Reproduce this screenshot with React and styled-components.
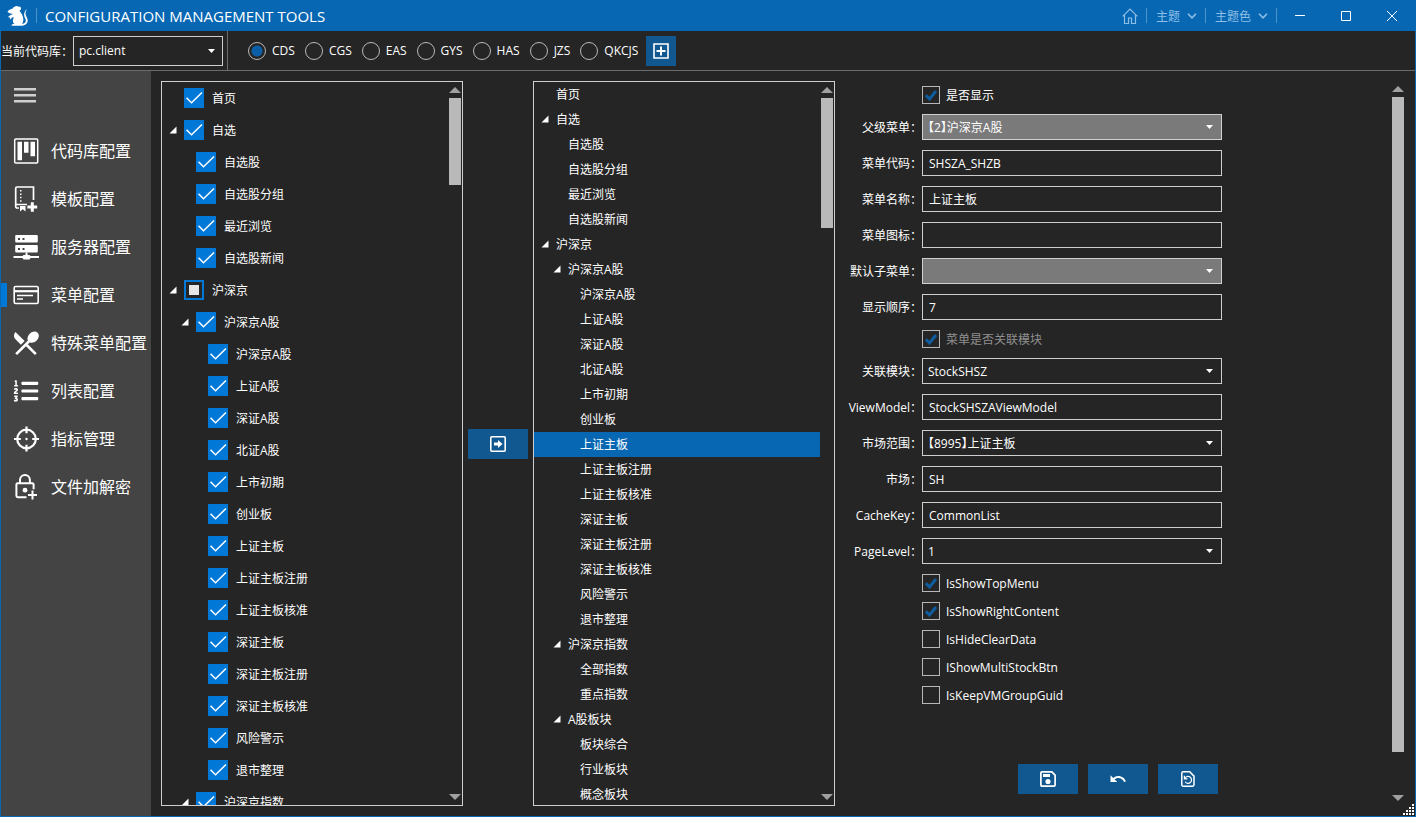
import React from "react";
import styled, { createGlobalStyle, css } from "styled-components";
import { FaListOl } from "react-icons/fa";
import { MdRestaurantMenu, MdUndo } from "react-icons/md";

// --- Theme values ---
const colors = {
  primary: "#0767b3",
  accent: "#0078d7",
  button: "#10588f",
  background: "#252525",
  sidebar: "#444444",
  border: "#cfcfcf",
  line: "#6b6b6b",
  disabled: "#7a7a7a",
  thumb: "#b9b9b9",
};

const GlobalStyle = createGlobalStyle`
  * {
    box-sizing: border-box;
  }

  body {
    margin: 0;
    background: ${colors.background};
  }

  body, button, input, select {
    font-family: "Open Sans", "Noto Sans CJK SC", sans-serif;
    font-size: 12px;
    color: #ffffff;
  }
`;

// --- Window ---
const Window = styled.div`
  display: flex;
  flex-direction: column;
  height: 100vh;
  border: 1px solid ${colors.primary};
  border-top: none;
  overflow: hidden;
`;

const TitleBar = styled.header`
  display: flex;
  align-items: center;
  flex: none;
  height: 31px;
  padding-left: 5px;
  background: ${colors.primary};
`;

const Brand = styled.div`
  display: flex;
  align-items: center;
  flex: 1;
  gap: 6px;
`;

const Title = styled.h1`
  margin: 0;
  padding-left: 2px;
  font-size: 15px;
  font-weight: 400;
  line-height: 24px;
  white-space: nowrap;
`;

const Separator = styled.span`
  width: 1px;
  height: 15px;
  background: #4a93cb;
`;

const TitleLink = styled.button`
  display: flex;
  align-items: center;
  gap: 7px;
  height: 31px;
  padding: 0 8px 0 9px;
  border: none;
  background: none;
  color: #8dbfe6;
`;

const CaptionButton = styled.button`
  display: grid;
  place-items: center;
  width: 46px;
  height: 31px;
  padding: 0;
  border: none;
  background: none;
`;

// --- Toolbar ---
const Toolbar = styled.div`
  display: flex;
  align-items: center;
  flex: none;
  height: 40px;
  border-bottom: 1px solid ${colors.line};
`;

const ToolbarField = styled.div`
  display: flex;
  align-items: center;
  align-self: stretch;
  padding-right: 4px;
  border-right: 1px solid ${colors.line};
`;

const RadioGroup = styled.div`
  display: flex;
  align-items: center;
  gap: 10px;
  padding: 0 8px 0 20px;
`;

const RadioLabel = styled.label`
  display: flex;
  align-items: center;
  gap: 6px;
`;

const Radio = styled.input`
  appearance: none;
  width: 18px;
  height: 18px;
  margin: 0;
  border: 1px solid #b8b8b8;
  border-radius: 50%;

  &:checked {
    background: radial-gradient(circle, #0a5fa8 0 5px, transparent 6px);
  }
`;

const ActionButton = styled.button`
  display: grid;
  place-items: center;
  flex: none;
  width: ${({ $square }) => ($square ? "30px" : "60px")};
  height: 30px;
  padding: 0;
  border: none;
  background: ${colors.button};
`;

// --- Sidebar ---
const Body = styled.div`
  display: flex;
  flex: 1;
  min-height: 0;
`;

const Sidebar = styled.nav`
  display: flex;
  flex-direction: column;
  flex: none;
  width: 150px;
  background: ${colors.sidebar};
`;

const MenuToggle = styled.button`
  display: flex;
  align-items: center;
  height: 48px;
  margin-bottom: 8px;
  padding: 0 13px;
  border: none;
  background: none;
`;

const NavItem = styled.a`
  display: flex;
  align-items: center;
  height: 48px;
  color: #ffffff;
  font-size: 16px;
  text-decoration: none;
  white-space: nowrap;

  &::before {
    content: "";
    width: 6px;
    height: 24px;
    margin-right: 6px;
    background: ${({ $active }) => ($active ? colors.accent : "transparent")};
  }

  svg {
    flex: none;
    margin-right: 12px;
  }
`;

const NavText = styled.span`
  padding-bottom: 2px;
`;

// --- Trees ---
const Content = styled.main`
  display: flex;
  flex: 1;
  min-width: 0;
  padding: 10px;
`;

const TreePanel = styled.section`
  display: flex;
  flex: none;
  width: 302px;
  border: 1px solid ${colors.border};
`;

const TreeList = styled.ul`
  flex: 1;
  margin: 0;
  padding: 0;
  list-style: none;
  overflow-y: auto;
  scrollbar-width: none;
`;

const TreeRow = styled.li`
  display: flex;
  align-items: center;
  height: ${({ $tall }) => ($tall ? "32px" : "25px")};
  padding-bottom: ${({ $tall }) => ($tall ? "0" : "1px")};
  padding-left: ${({ $level }) => 7 + $level * 12}px;
  background: ${({ $selected }) => ($selected ? colors.primary : "transparent")};
  white-space: nowrap;
`;

const Expander = styled.span`
  display: flex;
  flex: none;
  width: 15px;
`;

const TreeLabel = styled.label`
  display: flex;
  align-items: center;
  gap: 8px;
`;

const CheckWrap = styled.span`
  display: grid;
  flex: none;

  > * {
    grid-area: 1 / 1;
  }

  svg {
    place-self: center;
    pointer-events: none;
  }
`;

const TreeCheck = styled.input`
  appearance: none;
  width: 20px;
  height: 20px;
  margin: 0;
  border: 2px solid ${colors.accent};
  background: ${({ $partial }) => ($partial ? "transparent" : colors.accent)};
`;

const TransferColumn = styled.div`
  display: flex;
  align-items: center;
  justify-content: center;
  flex: none;
  width: 70px;
`;

// --- Scroll bar ---
const ScrollColumn = styled.div`
  display: flex;
  flex-direction: column;
  align-items: center;
  flex: none;
  width: 14px;
`;

const ScrollArrow = styled.span`
  display: grid;
  place-items: center;
  flex: none;
  height: 16px;
`;

const Track = styled.div`
  flex: 1;
  width: 12px;
`;

const Thumb = styled.div`
  height: ${({ $size }) => $size}%;
  background: ${colors.thumb};
`;

// --- Form ---
const FormPanel = styled.form`
  display: flex;
  flex: 1;
  min-width: 0;
`;

const FormScroll = styled.div`
  display: flex;
  flex-direction: column;
  flex: 1;
  min-width: 0;
  overflow-y: auto;
  scrollbar-width: none;
`;

const Field = styled.div`
  display: grid;
  grid-template-columns: 87px 300px;
  align-items: center;
  flex: none;
  height: 36px;
`;

const FieldLabel = styled.label`
  justify-self: end;
  white-space: nowrap;
`;

const CheckRow = styled.div`
  flex: none;
  height: 28px;
  padding: 5px 0 5px 87px;
`;

const CheckLabel = styled.label`
  display: inline-flex;
  align-items: center;
  gap: 6px;
  height: 18px;
  color: ${({ $muted }) => ($muted ? "#8f8f8f" : "#ffffff")};
`;

const FormCheck = styled.input`
  appearance: none;
  width: 18px;
  height: 18px;
  margin: 0;
  border: 1px solid #b8b8b8;
`;

const controlStyle = css`
  width: 100%;
  height: 26px;
  margin: 0;
  padding: 0 6px;
  border: 1px solid ${colors.border};
  border-radius: 0;
  background: transparent;
  color: #ffffff;
  outline: none;
`;

const TextInput = styled.input`
  ${controlStyle}
`;

const SelectWrap = styled.span`
  display: grid;
  align-items: center;
  width: ${({ $large }) => ($large ? "150px" : "100%")};

  > * {
    grid-area: 1 / 1;
  }

  svg {
    justify-self: end;
    margin-right: ${({ $large }) => ($large ? "8px" : "9px")};
    pointer-events: none;
  }
`;

const Select = styled.select`
  ${controlStyle}
  appearance: none;
  height: ${({ $large }) => ($large ? "30px" : "26px")};
  padding: 0 5px;
  font-feature-settings: "halt";

  &:disabled {
    background: ${colors.disabled};
    opacity: 1;
  }
`;

const FormActions = styled.div`
  display: flex;
  justify-content: flex-end;
  gap: 10px;
  flex: none;
  width: 383px;
  margin-top: auto;
  padding-bottom: 12px;
`;

const ResizeGrip = styled.svg`
  position: absolute;
  right: 2px;
  bottom: 2px;
`;

// --- Icons ---
const RatIcon = () => (
  <svg width="24" height="22" viewBox="0 0 24 22" fill="#fff">
    <path d="M8.6 1.7c1.3-1.3 3-.9 3.7.1 1.1-.6 2.9.2 2.7 1.9-.1 1-.7 1.6-1.4 1.9.2 1 .9 1.7 1.6 2.7 1.2 1.7 2 3.600 2.100 5.700.1 2-.4 3.700-1.200 4.900 2.400-.2 3.800-1.500 3.700-3.600-.1-1.800-1.600-3.100-1.700-5.400-.1-2.200 1-4.400 2.900-5.900-1.100 1.900-1.700 3.700-1.400 5.400.4 2.100 2 3.300 2.100 5.800.1 3.400-2.700 5.500-6.500 5.500H5.800c-.5-.8.3-1.700 1.600-1.700h1.200c-1.500-1-2-2.500-1.600-4.300l.8-2.700-2.100.7-.8 1.500-.9-.3.1-1.500-1.500.2-.2-1 2.200-1.500 2.400-1.100-2.200-.4C3.200 8.200 1.900 7.500 1.500 6.700c1.100-1.500 3-2.800 5.300-3.200.2-.8.8-1.500 1.800-1.800z" />
  </svg>
);

const HomeIcon = () => (
  <svg width="16" height="16" viewBox="0 0 16 16" fill="none" stroke="#8dbfe6" strokeWidth="1.2">
    <path d="M.7 8.300 8 1l7.300 7.300M2.500 7v8.500h4V10h3v5.500h4V7" />
  </svg>
);

const ChevronIcon = () => (
  <svg width="10" height="6" viewBox="0 0 10 6" fill="none" stroke="#8dbfe6" strokeWidth="1.6">
    <path d="m1 .8 4 4 4-4" />
  </svg>
);

const CaretIcon = () => (
  <svg width="7" height="4" viewBox="0 0 7 4" fill="#fff">
    <path d="M0 0h7L3.500 4z" />
  </svg>
);

const ExpandIcon = () => (
  <svg width="8" height="8" viewBox="0 0 8 8" fill="#fff">
    <path d="M7.500.5v7h-7z" />
  </svg>
);

const ThinCheck = () => (
  <svg width="20" height="20" viewBox="0 0 20 20" fill="none" stroke="#fff" strokeWidth="1.500">
    <path d="m2.500 9.700 5 5L18 4.500" />
  </svg>
);

const PartialMark = () => (
  <svg width="10" height="10" viewBox="0 0 10 10" fill="#e6e6e6">
    <path d="M0 0h10v10H0z" />
  </svg>
);

const BoldCheck = () => (
  <svg width="18" height="18" viewBox="0 0 18 18" fill="none" stroke="#0f5c9e" strokeWidth="3">
    <path d="m3.800 9.200 3.700 3.700L14 5" />
  </svg>
);

const ScrollArrowIcon = ({ down }) => (
  <svg width="12" height="6" viewBox="0 0 12 6" fill="#a0a0a0">
    <path d={down ? "M0 0h12L6 6z" : "M0 6h12L6 0z"} />
  </svg>
);

const HamburgerIcon = () => (
  <svg width="22" height="16" viewBox="0 0 22 16" fill="#cfcfcf">
    <path d="M0 1h22v2.600H0zM0 7h22v2.600H0zM0 13h22v2.600H0z" />
  </svg>
);

const BoardIcon = () => (
  <svg width="26" height="26" viewBox="0 0 26 26" fill="#fff">
    <rect x="1.700" y="1" width="23" height="24" rx="1" fill="none" stroke="#fff" strokeWidth="1.500" />
    <path d="M4.500 3.800H9v18.400H4.500zM11 3.800h4.500v11H11zM17.500 3.800H22v14.400h-4.500z" />
  </svg>
);

const TemplateIcon = () => (
  <svg width="26" height="26" viewBox="0 0 26 26" fill="#fff">
    <path
      d="M6 22H4.200a1.500 1.500 0 0 1-1.500-1.500V2.300c0-.7.600-1.300 1.300-1.300h16.500v13M2.700 18.500H14"
      fill="none"
      stroke="#fff"
      strokeWidth="1.700"
    />
    <path d="M7 4h1.500v1.500H7zM7 7.400h1.500v1.500H7zM7 10.800h1.500v1.500H7zM7 14.200h1.500v1.500H7zM7 20h5.500v5.500l-2.700-2.300L7 25.500z" />
    <path d="M17.800 16.200h3v3.300h3.400v3h-3.400v3.300h-3v-3.300h-3.400v-3h3.400z" />
  </svg>
);

const ServerIcon = () => (
  <svg width="26" height="26" viewBox="0 0 26 26" fill="#fff">
    <path
      fillRule="evenodd"
      d="M3.500 1h20c.8 0 1.300.5 1.300 1.300v5c0 .8-.5 1.300-1.300 1.300h-20c-.8 0-1.300-.5-1.300-1.300v-5C2.200 1.500 2.700 1 3.500 1zM5 4v2h2V4zm4.500 0v2h2V4zM3.500 11h20c.8 0 1.300.5 1.300 1.300v5c0 .8-.5 1.300-1.300 1.300h-20c-.8 0-1.300-.5-1.300-1.300v-5c0-.8.500-1.300 1.300-1.300zM5 14v2h2v-2zm4.500 0v2h2v-2z"
    />
    <path d="M12.500 18.500h2V21h2l1 1H26v2h-8.500l-1 1.500h-6l-1-1.500H.5v-2h9l1-1h2z" />
  </svg>
);

const CardIcon = () => (
  <svg width="26" height="26" viewBox="0 0 26 26" fill="none" stroke="#fff">
    <rect x="1.200" y="4.500" width="24" height="17" rx="1.500" strokeWidth="1.600" />
    <path d="M1 9.200h24" strokeWidth="2.200" />
    <path d="M4 13.500h16M4 17h6" strokeWidth="1.500" />
  </svg>
);

const TargetIcon = () => (
  <svg width="26" height="26" viewBox="0 0 26 26" fill="none" stroke="#fff" strokeWidth="2.200">
    <circle cx="13.500" cy="13" r="9.300" />
    <path d="M13.500.5v6.800M13.500 18.700v6.800M1 13h6.800M19.200 13H26" />
    <circle cx="13.500" cy="13" r="1.200" fill="#fff" stroke="none" />
  </svg>
);

const LockPlusIcon = () => (
  <svg width="26" height="26" viewBox="0 0 26 26" fill="none" stroke="#fff" strokeWidth="2">
    <path d="M13.500 23.200H4.800c-.8 0-1.400-.6-1.400-1.400V10.600c0-.8.600-1.400 1.400-1.400h14.400c.8 0 1.400.6 1.400 1.400v4.600M7 9.200V6a4.900 4.900 0 0 1 9.900 0v3.200M19.500 16.500v9M15 21h9" />
    <circle cx="12" cy="16.200" r="2.400" fill="#fff" stroke="none" />
  </svg>
);

const AddBoxIcon = () => (
  <svg width="16" height="16" viewBox="0 0 16 16" fill="none" stroke="#fff" strokeWidth="2">
    <path d="M1 1h14v14H1z" strokeWidth="1.600" />
    <path d="M8 3.500v9M3.500 8h9" />
  </svg>
);

const TransferIcon = () => (
  <svg width="16" height="16" viewBox="0 0 16 16" fill="#fff">
    <rect x=".8" y=".8" width="14.400" height="14.400" rx="1" fill="none" stroke="#fff" strokeWidth="1.600" />
    <path d="M4 6.500h4V4l4.500 4L8 12V9.500H4z" />
  </svg>
);

const SaveIcon = () => (
  <svg width="16" height="16" viewBox="0 0 16 16" fill="#fff">
    <path
      d="M2 .9h9.800l3.300 3.300V14c0 .6-.5 1.100-1.100 1.100H2c-.6 0-1.100-.5-1.100-1.100V2C.9 1.400 1.400.9 2 .9z"
      fill="none"
      stroke="#fff"
      strokeWidth="1.700"
    />
    <path d="M3 3h7v3H3z" />
    <circle cx="8" cy="10.500" r="2.600" />
  </svg>
);

const RestorePageIcon = () => (
  <svg width="14" height="16" viewBox="0 0 14 16" fill="none" stroke="#fff" strokeWidth="1.500">
    <path d="M2.200.8h6.500l4.300 4.300v8.700c0 .8-.6 1.400-1.400 1.400H2.200c-.8 0-1.400-.6-1.400-1.400V2.200C.8 1.400 1.400.8 2.200.8z" />
    <path d="M3.800 7.500a3.500 3.500 0 1 1 .3 3.200M3.400 4.800v3h3" strokeWidth="1.200" />
  </svg>
);

// --- Data ---
const navItems = [
  { label: "代码库配置", icon: <BoardIcon /> },
  { label: "模板配置", icon: <TemplateIcon /> },
  { label: "服务器配置", icon: <ServerIcon /> },
  { label: "菜单配置", icon: <CardIcon />, active: true },
  { label: "特殊菜单配置", icon: <MdRestaurantMenu size={26} viewBox="2 2 20 20" /> },
  { label: "列表配置", icon: <FaListOl size={26} viewBox="-16 0 544 512" /> },
  { label: "指标管理", icon: <TargetIcon /> },
  { label: "文件加解密", icon: <LockPlusIcon /> },
];

const repositories = ["CDS", "CGS", "EAS", "GYS", "HAS", "JZS", "QKCJS"];

// [level, label, expandable, partial]
const menuTree = [
  [0, "首页"],
  [0, "自选", true],
  [1, "自选股"],
  [1, "自选股分组"],
  [1, "最近浏览"],
  [1, "自选股新闻"],
  [0, "沪深京", true, true],
  [1, "沪深京A股", true],
  [2, "沪深京A股"],
  [2, "上证A股"],
  [2, "深证A股"],
  [2, "北证A股"],
  [2, "上市初期"],
  [2, "创业板"],
  [2, "上证主板"],
  [2, "上证主板注册"],
  [2, "上证主板核准"],
  [2, "深证主板"],
  [2, "深证主板注册"],
  [2, "深证主板核准"],
  [2, "风险警示"],
  [2, "退市整理"],
  [1, "沪深京指数", true],
  [2, "全部指数"],
  [2, "重点指数"],
  [1, "A股板块", true],
  [2, "板块综合"],
  [2, "行业板块"],
  [2, "概念板块"],
];

const sourceTree = menuTree.slice(0, 23);

const selectedIndex = 14;

const fields = [
  { type: "check", id: "visible", label: "是否显示", checked: true },
  { type: "select", id: "parent", label: "父级菜单：", value: "【2】沪深京A股", disabled: true },
  { type: "text", id: "code", label: "菜单代码：", value: "SHSZA_SHZB" },
  { type: "text", id: "name", label: "菜单名称：", value: "上证主板" },
  { type: "text", id: "icon", label: "菜单图标：", value: "" },
  { type: "select", id: "child", label: "默认子菜单：", value: "", disabled: true },
  { type: "text", id: "order", label: "显示顺序：", value: "7" },
  { type: "check", id: "linked", label: "菜单是否关联模块", checked: true, disabled: true },
  { type: "select", id: "module", label: "关联模块：", value: "StockSHSZ" },
  { type: "text", id: "viewModel", label: "ViewModel：", value: "StockSHSZAViewModel" },
  { type: "select", id: "range", label: "市场范围：", value: "【8995】上证主板" },
  { type: "text", id: "market", label: "市场：", value: "SH" },
  { type: "text", id: "cacheKey", label: "CacheKey：", value: "CommonList" },
  { type: "select", id: "pageLevel", label: "PageLevel：", value: "1" },
  { type: "check", id: "topMenu", label: "IsShowTopMenu", checked: true },
  { type: "check", id: "rightContent", label: "IsShowRightContent", checked: true },
  { type: "check", id: "clearData", label: "IsHideClearData" },
  { type: "check", id: "multiStock", label: "IShowMultiStockBtn" },
  { type: "check", id: "vmGroup", label: "IsKeepVMGroupGuid" },
];

// --- Parts ---
const ScrollBar = ({ size }) => (
  <ScrollColumn aria-hidden="true">
    <ScrollArrow>
      <ScrollArrowIcon />
    </ScrollArrow>
    <Track>
      <Thumb $size={size} />
    </Track>
    <ScrollArrow>
      <ScrollArrowIcon down />
    </ScrollArrow>
  </ScrollColumn>
);

const ComboBox = ({ id, value, disabled, large }) => (
  <SelectWrap $large={large}>
    <Select id={id} defaultValue={value} disabled={disabled} $large={large}>
      <option value={value}>{value}</option>
    </Select>
    <CaretIcon />
  </SelectWrap>
);

const FormField = ({ type, id, label, value, checked, disabled }) => {
  if (type === "check") {
    return (
      <CheckRow>
        <CheckLabel $muted={disabled}>
          <CheckWrap>
            <FormCheck type="checkbox" id={id} defaultChecked={checked} disabled={disabled} />
            {checked && <BoldCheck />}
          </CheckWrap>
          {label}
        </CheckLabel>
      </CheckRow>
    );
  }

  return (
    <Field>
      <FieldLabel htmlFor={id}>{label}</FieldLabel>
      {type === "select" ? (
        <ComboBox id={id} value={value} disabled={disabled} />
      ) : (
        <TextInput id={id} type="text" defaultValue={value} />
      )}
    </Field>
  );
};

const App = () => {
  return (
    <>
      <GlobalStyle />
      <Window lang="zh-CN">
        <TitleBar>
          <Brand>
            <RatIcon />
            <Separator />
            <Title>CONFIGURATION MANAGEMENT TOOLS</Title>
          </Brand>
          <TitleLink type="button" aria-label="主页">
            <HomeIcon />
          </TitleLink>
          <Separator />
          <TitleLink type="button">
            主题
            <ChevronIcon />
          </TitleLink>
          <Separator />
          <TitleLink type="button">
            主题色
            <ChevronIcon />
          </TitleLink>
          <Separator />
          <CaptionButton type="button" aria-label="最小化">
            <svg width="10" height="10" viewBox="0 0 10 10" stroke="#fff">
              <path d="M0 4.500h10" />
            </svg>
          </CaptionButton>
          <CaptionButton type="button" aria-label="最大化">
            <svg width="10" height="10" viewBox="0 0 10 10" fill="none" stroke="#fff">
              <path d="M.5.5h9v9h-9z" />
            </svg>
          </CaptionButton>
          <CaptionButton type="button" aria-label="关闭">
            <svg width="10" height="10" viewBox="0 0 10 10" stroke="#fff">
              <path d="m0 0 10 10M10 0 0 10" />
            </svg>
          </CaptionButton>
        </TitleBar>

        <Toolbar>
          <ToolbarField>
            <FieldLabel htmlFor="repository">当前代码库：</FieldLabel>
            <ComboBox id="repository" value="pc.client" large />
          </ToolbarField>
          <RadioGroup>
            {repositories.map((name) => (
              <RadioLabel key={name}>
                <Radio type="radio" name="system" defaultChecked={name === "CDS"} />
                {name}
              </RadioLabel>
            ))}
          </RadioGroup>
          <ActionButton type="button" aria-label="添加" $square>
            <AddBoxIcon />
          </ActionButton>
        </Toolbar>

        <Body>
          <Sidebar>
            <MenuToggle type="button" aria-label="菜单">
              <HamburgerIcon />
            </MenuToggle>
            {navItems.map(({ label, icon, active }) => (
              <NavItem key={label} href="#" $active={active}>
                {icon}
                <NavText>{label}</NavText>
              </NavItem>
            ))}
          </Sidebar>

          <Content>
            <TreePanel>
              <TreeList>
                {sourceTree.map(([level, label, expandable, partial], index) => (
                  <TreeRow key={index} $level={level} $tall>
                    <Expander>{expandable && <ExpandIcon />}</Expander>
                    <TreeLabel>
                      <CheckWrap>
                        <TreeCheck type="checkbox" defaultChecked={!partial} $partial={partial} />
                        {partial ? <PartialMark /> : <ThinCheck />}
                      </CheckWrap>
                      {label}
                    </TreeLabel>
                  </TreeRow>
                ))}
              </TreeList>
              <ScrollBar size={12.6} />
            </TreePanel>

            <TransferColumn>
              <ActionButton type="button" aria-label="移入">
                <TransferIcon />
              </ActionButton>
            </TransferColumn>

            <TreePanel>
              <TreeList>
                {menuTree.map(([level, label, expandable], index) => (
                  <TreeRow key={index} $level={level} $selected={index === selectedIndex}>
                    <Expander>{expandable && <ExpandIcon />}</Expander>
                    {label}
                  </TreeRow>
                ))}
              </TreeList>
              <ScrollBar size={18.8} />
            </TreePanel>

            <FormPanel>
              <FormScroll>
                {fields.map((field) => (
                  <FormField key={field.id} {...field} />
                ))}
                <FormActions>
                  <ActionButton type="button" aria-label="保存">
                    <SaveIcon />
                  </ActionButton>
                  <ActionButton type="button" aria-label="撤销">
                    <MdUndo size={18} />
                  </ActionButton>
                  <ActionButton type="button" aria-label="还原">
                    <RestorePageIcon />
                  </ActionButton>
                </FormActions>
              </FormScroll>
              <ScrollBar size={94.5} />
            </FormPanel>
          </Content>
        </Body>

        <ResizeGrip width="11" height="11" viewBox="0 0 11 11" fill="#fff">
          <path d="M9 0h2v2H9zM6 3h2v2H6zM9 3h2v2H9zM3 6h2v2H3zM6 6h2v2H6zM9 6h2v2H9zM0 9h2v2H0zM3 9h2v2H3zM6 9h2v2H6zM9 9h2v2H9z" />
        </ResizeGrip>
      </Window>
    </>
  );
};

export default App;
